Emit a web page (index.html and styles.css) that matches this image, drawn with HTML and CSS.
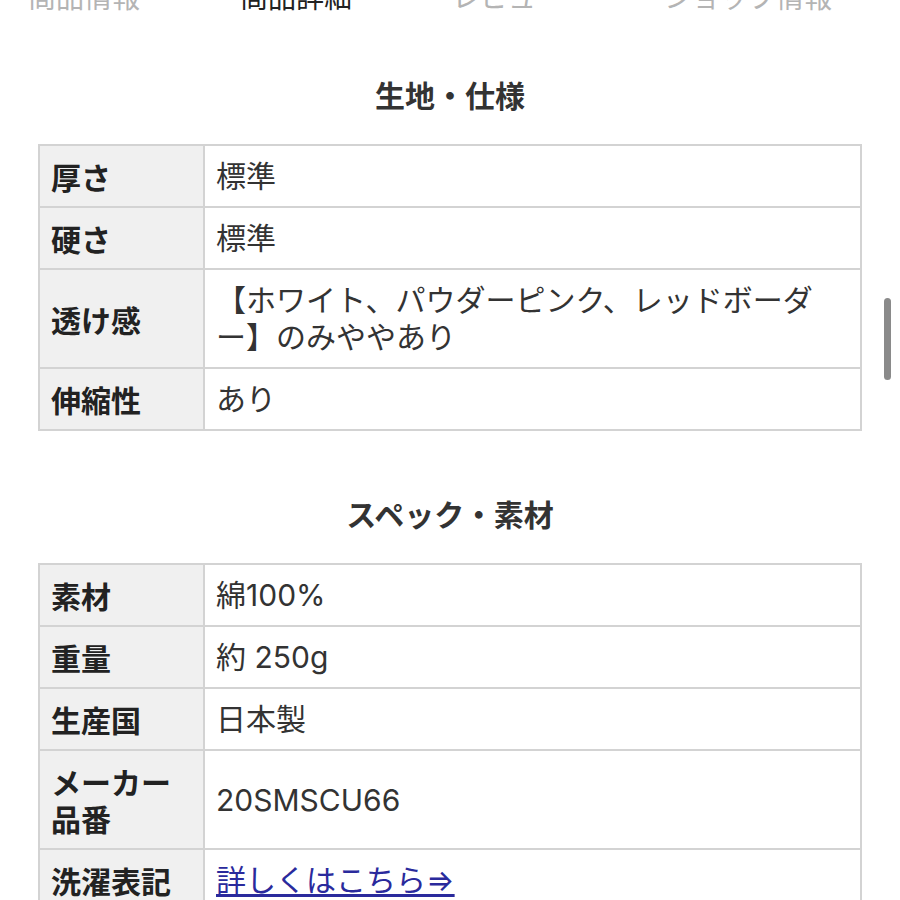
FILE: index.html
```html
<!DOCTYPE html>
<html lang="ja">
<head>
<meta charset="utf-8">
<title>商品詳細</title>
<link rel="stylesheet" href="styles.css">
</head>
<body>
<nav class="tabs">
  <span class="tab">商品情報</span>
  <span class="tab active">商品詳細</span>
  <span class="tab">レビュー</span>
  <span class="tab">ショップ情報</span>
</nav>

<section class="section">
  <h2 class="heading">生地・仕様</h2>
  <table class="spec">
    <colgroup><col class="col-label"><col></colgroup>
    <tr><th>厚さ</th><td>標準</td></tr>
    <tr><th>硬さ</th><td>標準</td></tr>
    <tr><th>透け感</th><td>【ホワイト、パウダーピンク、レッドボーダー】のみややあり</td></tr>
    <tr><th>伸縮性</th><td>あり</td></tr>
  </table>
</section>

<section class="section">
  <h2 class="heading">スペック・素材</h2>
  <table class="spec">
    <colgroup><col class="col-label"><col></colgroup>
    <tr><th>素材</th><td>綿100%</td></tr>
    <tr><th>重量</th><td>約 250g</td></tr>
    <tr><th>生産国</th><td>日本製</td></tr>
    <tr><th>メーカー品番</th><td>20SMSCU66</td></tr>
    <tr><th>洗濯表記</th><td><a class="link" href="#">詳しくはこちら⇒</a></td></tr>
  </table>
</section>

<div class="scrollbar"></div>
</body>
</html>
```

FILE: styles.css
```css
html, body {
  margin: 0;
  padding: 0;
  background: #fff;
  overflow: hidden;
}

body {
  font-family: "Noto Sans CJK JP", "Noto Sans", sans-serif;
  color: #333;
}

.tabs {
  display: flex;
  gap: 100px;
  padding-left: 28px;
  margin-top: -18px;
  height: 30px;
  white-space: nowrap;
}

.tab {
  font-size: 28px;
  line-height: 28px;
  color: #b4b4b4;
}

.tab.active {
  color: #222;
}

.section {
  padding: 0 38px;
}

.heading {
  margin: 62px 0 30px;
  font-size: 30px;
  line-height: 40px;
  font-weight: 700;
  text-align: center;
  color: #333;
}

.spec {
  width: 100%;
  border-collapse: collapse;
  table-layout: fixed;
  font-size: 30px;
  line-height: 37px;
}

.col-label {
  width: 165px;
}

.spec th,
.spec td {
  border: 2px solid #d3d3d3;
  padding: 12px 30px 11px 11px;
  text-align: left;
  vertical-align: middle;
}

.spec th {
  background: #f0f0f0;
  font-weight: 700;
  color: #222;
  padding-right: 11px;
}

.spec td {
  font-family: "Inter", "Noto Sans CJK JP", sans-serif;
  font-weight: 400;
  color: #333;
}

.link {
  color: #2a2a9c;
  text-decoration: underline;
  text-underline-offset: 3px;
}

.scrollbar {
  position: fixed;
  left: 884px;
  top: 298px;
  width: 7px;
  height: 82px;
  border-radius: 4px;
  background: #8a8a8a;
}
```
